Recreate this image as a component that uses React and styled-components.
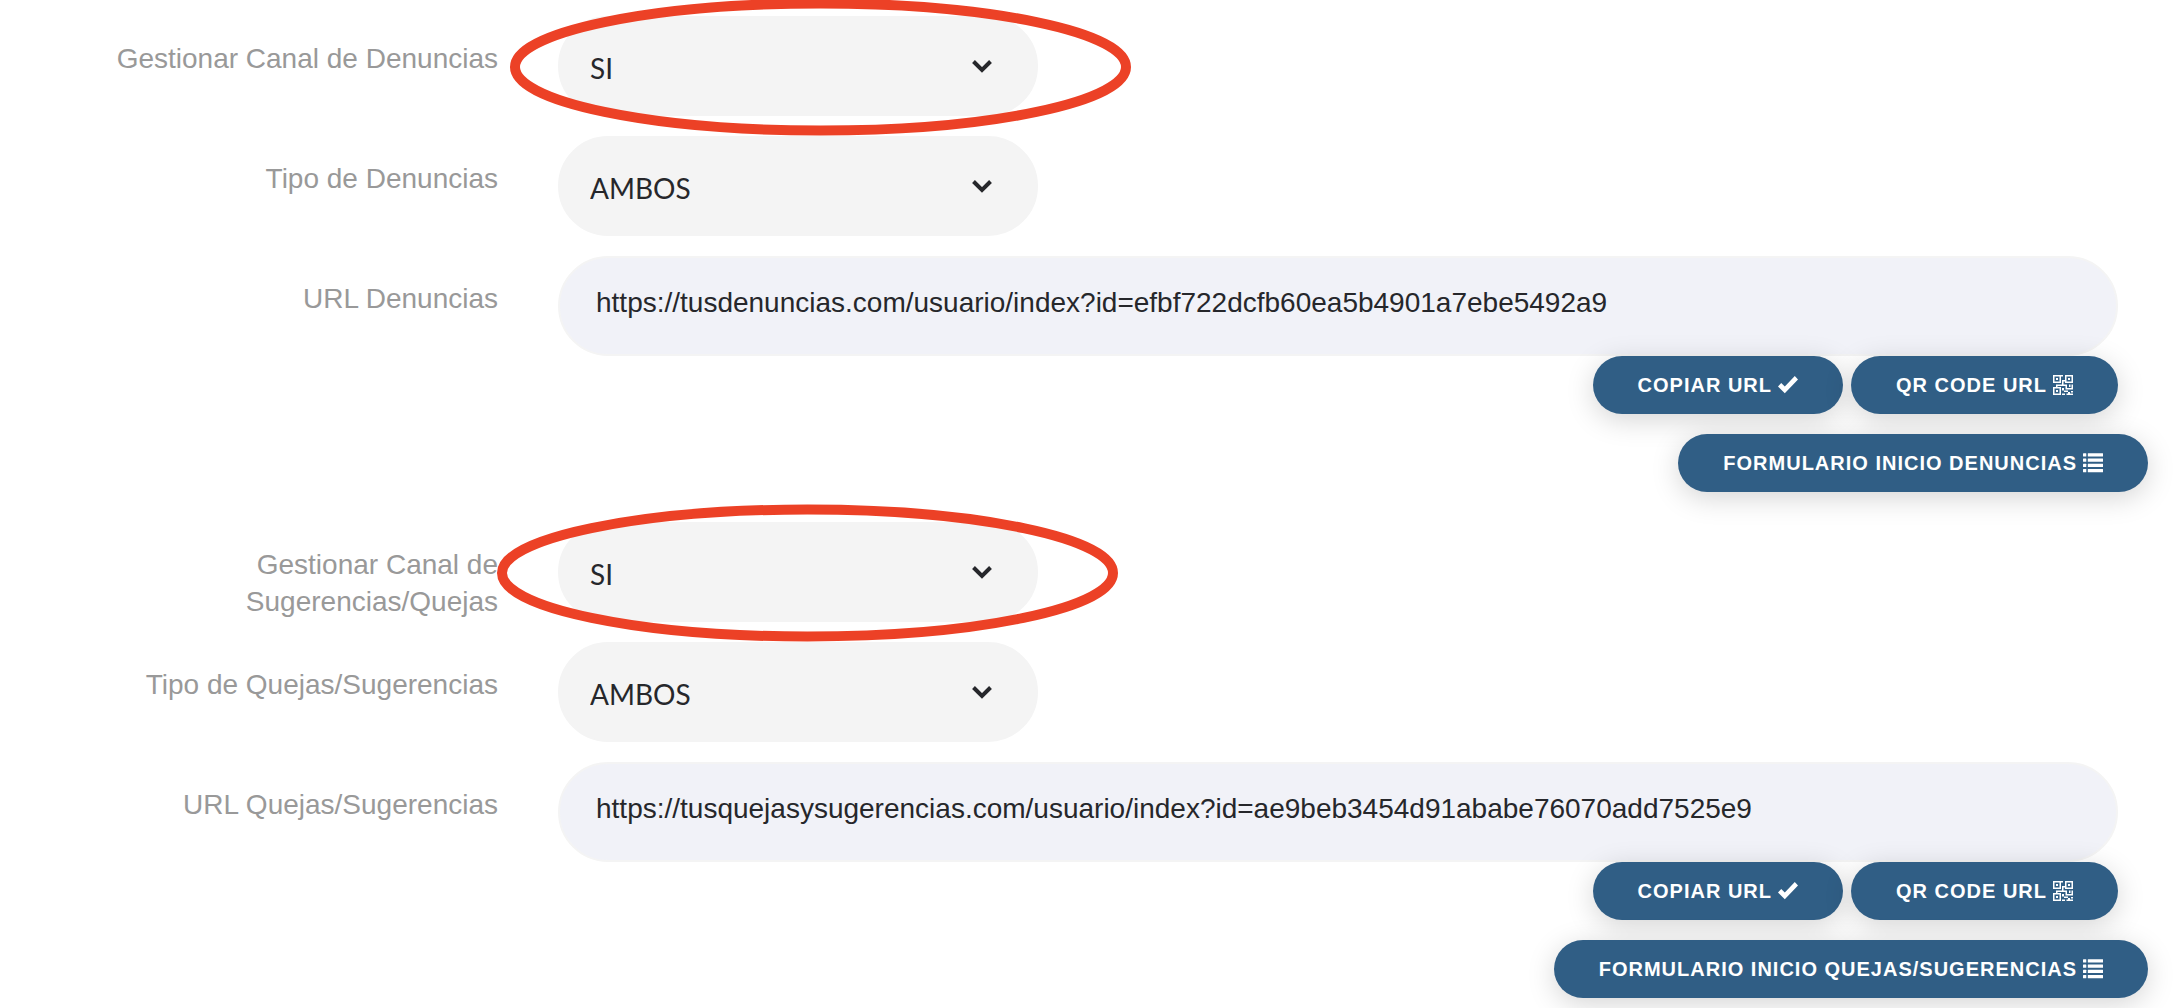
import { useId } from 'react';
import styled, { createGlobalStyle, css } from 'styled-components';

const GlobalStyle = createGlobalStyle`
  * {
    box-sizing: border-box;
  }

  body {
    margin: 0;
    background: #fff;
    color: #26272b;
    font-family: 'Liberation Sans', Arial, sans-serif;
    overflow-x: hidden;
  }
`;

// Layout
const Form = styled.form`
  margin: 0 32px 0 -12px;
  padding: 16px 0 10px;
`;

const Section = styled.section`
  & + & {
    margin-top: 30px;
  }
`;

const Row = styled.div`
  display: grid;
  grid-template-columns: 1fr 3fr;
  height: 100px;
  margin-bottom: ${({ $flush }) => ($flush ? '0' : '20px')};
`;

const Label = styled.label`
  padding: 24px 30px 0;
  color: #999;
  font-size: 28px;
  line-height: 37px;
  text-align: right;
`;

const Cell = styled.div`
  padding: 0 30px;
`;

const Actions = styled.div`
  display: flex;
  justify-content: flex-end;
  gap: 8px;
  padding-right: ${({ $inset }) => ($inset ? '30px' : '0')};

  & + & {
    margin-top: 20px;
  }
`;

// Controls
const SelectBox = styled.div`
  position: relative;
  width: 100%;
  max-width: 480px;
`;

const field = css`
  display: block;
  width: 100%;
  height: 100px;
  margin: 0;
  border: 2px solid #f4f4f4;
  border-radius: 50px;
  outline: none;
  color: #26272b;
  font-size: 28px;
`;

const Select = styled.select`
  ${field}
  appearance: none;
  padding: 4px 80px 0 30px;
  background: #f4f4f4;
  font-family: Lato, sans-serif;
`;

const Chevron = styled.svg`
  position: absolute;
  top: 43px;
  right: 45px;
  width: 22px;
  height: 14px;
  pointer-events: none;
`;

const UrlInput = styled.input`
  ${field}
  padding: 0 36px 6px;
  background: #f1f2f8;
  font-family: 'Liberation Sans', Arial, sans-serif;
`;

const Button = styled.button`
  display: inline-flex;
  align-items: center;
  gap: 6px;
  height: 58px;
  padding: 0 45px;
  border: 0;
  border-radius: 29px;
  background: #305e85;
  box-shadow: 0 6px 28px rgba(0, 0, 0, 0.17);
  color: #fff;
  font-family: 'Liberation Sans', Arial, sans-serif;
  font-size: 20px;
  font-weight: 700;
  letter-spacing: 1px;
  text-transform: uppercase;
  white-space: nowrap;
  cursor: pointer;
`;

const Icon = styled.svg`
  flex: none;
  width: 20px;
  height: 20px;
  fill: currentColor;
`;

// Hand drawn ring around the select that matters
const Ring = styled.svg`
  position: absolute;
  z-index: 1;
  top: -18px;
  left: ${({ $left }) => $left};
  width: 621px;
  height: 138px;
  overflow: visible;
  pointer-events: none;
`;

const CheckIcon = () => (
  <Icon viewBox="0 0 20 20" aria-hidden="true">
    <path d="M0 11.5 3.2 8 6.8 11.4 16.8 1 20 4.6 6.8 18.3Z" />
  </Icon>
);

const QrIcon = () => (
  <Icon viewBox="0 0 20 20" aria-hidden="true" fillRule="evenodd">
    <path d="M0 0h8v8H0zM1.5 1.5v5h5v-5zM3 3h2v2H3z" />
    <path d="M12 0h8v8h-8zM13.5 1.5v5h5v-5zM15 3h2v2h-2z" />
    <path d="M0 12h8v8H0zM1.5 13.5v5h5v-5zM3 15h2v2H3z" />
    <path d="M8 0h2v1.5H8zM9 5h1.5v4.500H9zM10.5 5H12v1.5h-1.5zM3 9.500h11V11H3zM3 11h1.500v1H3z" />
    <path d="M9 13h2v2.500H9zM12.500 11H14v3.500h-1.500zM14 13h6v1.500h-6zM16 9.500h1.500V12H16zM18.500 9.500H20V13h-1.500z" />
    <path d="M11 15.500h4V17h-4zM9 18.500h3V20H9zM15 17h2v1.500h-2zM18 16h2v1.500h-2zM13.500 18.500H20V20h-6.500z" />
  </Icon>
);

const ListIcon = () => (
  <Icon viewBox="0 0 20 20" aria-hidden="true">
    {[0.3, 5.5, 10.7, 15.9].map(y => (
      <g key={y}>
        <rect x="0" y={y} width="3.3" height="3.3" rx="0.5" />
        <rect x="4.800" y={y} width="15.2" height="3.3" rx="0.3" />
      </g>
    ))}
  </Icon>
);

function SelectRow({ label, options, ringLeft }) {
  const id = useId();

  return (
    <Row>
      <Label htmlFor={id}>{label}</Label>
      <Cell>
        <SelectBox>
          <Select id={id} defaultValue={options[0]}>
            {options.map(option => (
              <option key={option}>{option}</option>
            ))}
          </Select>
          <Chevron viewBox="0 0 22 14" aria-hidden="true">
            <path d="M2.5 2.5 11 11 19.5 2.5" fill="none" stroke="#26272b" strokeWidth="4" />
          </Chevron>
          {ringLeft && (
            <Ring $left={ringLeft} viewBox="0 0 621 138" aria-hidden="true">
              <ellipse cx="310.5" cy="69" rx="305.5" ry="63.5" fill="none" stroke="#ec4126" strokeWidth="10" />
            </Ring>
          )}
        </SelectBox>
      </Cell>
    </Row>
  );
}

function Channel({ manageLabel, typeLabel, urlLabel, url, formLabel, ringLeft }) {
  const urlId = useId();

  return (
    <Section>
      <SelectRow label={manageLabel} options={['SI', 'NO']} ringLeft={ringLeft} />
      <SelectRow label={typeLabel} options={['AMBOS']} />
      <Row $flush>
        <Label htmlFor={urlId}>{urlLabel}</Label>
        <Cell>
          <UrlInput id={urlId} type="text" value={url} readOnly />
        </Cell>
      </Row>
      <Actions $inset>
        <Button type="button">
          Copiar URL <CheckIcon />
        </Button>
        <Button type="button">
          QR Code URL <QrIcon />
        </Button>
      </Actions>
      <Actions>
        <Button type="button">
          {formLabel} <ListIcon />
        </Button>
      </Actions>
    </Section>
  );
}

export default function App() {
  return (
    <>
      <GlobalStyle />
      <Form>
        <Channel
          manageLabel="Gestionar Canal de Denuncias"
          typeLabel="Tipo de Denuncias"
          urlLabel="URL Denuncias"
          url="https://tusdenuncias.com/usuario/index?id=efbf722dcfb60ea5b4901a7ebe5492a9"
          formLabel="Formulario inicio denuncias"
          ringLeft="-48px"
        />
        <Channel
          manageLabel="Gestionar Canal de Sugerencias/Quejas"
          typeLabel="Tipo de Quejas/Sugerencias"
          urlLabel="URL Quejas/Sugerencias"
          url="https://tusquejasysugerencias.com/usuario/index?id=ae9beb3454d91ababe76070add7525e9"
          formLabel="Formulario inicio quejas/sugerencias"
          ringLeft="-61px"
        />
      </Form>
    </>
  );
}
